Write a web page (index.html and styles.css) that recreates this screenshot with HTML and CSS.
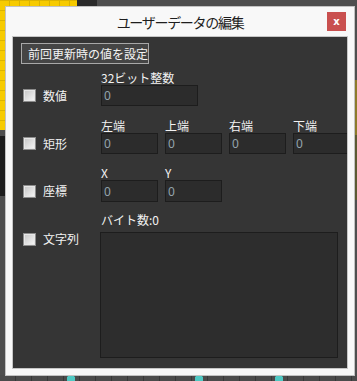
FILE: index.html
```html
<!DOCTYPE html>
<html lang="ja">
<head>
    <meta charset="UTF-8">
    <title>ユーザーデータの編集</title>
    <link rel="stylesheet" href="styles.css">
</head>
<body>
    <div class="dialogo">
        <div class="barra-titulo">
            <span></span>
            <span class="titulo">ユーザーデータの編集</span>
            <button class="fechar">x</button>
        </div>

        <div class="painel">
            <button class="btn-anterior">前回更新時の値を設定</button>

            <div class="linha linha-primeira">
                <span class="rotulo rotulo-largo">32ビット整数</span>
                <label class="marcar"><input type="checkbox"> 数値</label>
                <input class="campo campo-largo" type="text" value="0">
            </div>

            <div class="linha">
                <span class="rotulo">左端</span>
                <span class="rotulo">上端</span>
                <span class="rotulo">右端</span>
                <span class="rotulo">下端</span>
                <label class="marcar"><input type="checkbox"> 矩形</label>
                <input class="campo" type="text" value="0">
                <input class="campo" type="text" value="0">
                <input class="campo" type="text" value="0">
                <input class="campo" type="text" value="0">
            </div>

            <div class="linha linha-coord">
                <span class="rotulo">X</span>
                <span class="rotulo">Y</span>
                <label class="marcar"><input type="checkbox"> 座標</label>
                <input class="campo" type="text" value="0">
                <input class="campo" type="text" value="0">
            </div>

            <div class="linha linha-texto">
                <span class="rotulo rotulo-largo">バイト数:0</span>
                <label class="marcar"><input type="checkbox"> 文字列</label>
                <textarea class="texto"></textarea>
            </div>
        </div>
    </div>
</body>
</html>
```

FILE: styles.css
```css
html, body {
    margin: 0;
    height: 381px;
    overflow: hidden;
}

body {
    font-family: "Noto Sans CJK JP", "Noto Sans", sans-serif;
    font-size: 12px;
    padding: 6px 0 0 5px;
    box-sizing: border-box;
    background:
        radial-gradient(circle, #4fc9c4 0 4px, transparent 4.5px) 66px 374px / 10px 10px no-repeat,
        radial-gradient(circle, #4fc9c4 0 4px, transparent 4.5px) 194px 374px / 10px 10px no-repeat,
        radial-gradient(circle, #4fc9c4 0 4px, transparent 4.5px) 274px 374px / 10px 10px no-repeat,
        repeating-linear-gradient(90deg, transparent 0 9px, #dcb400 9px 10px) 0 0 / 77px 130px no-repeat,
        repeating-linear-gradient(0deg, transparent 0 9px, #dcb400 9px 10px) 0 0 / 77px 130px no-repeat,
        linear-gradient(#f7cb00, #f7cb00) 0 0 / 77px 130px no-repeat,
        linear-gradient(#2b2b2b, #2b2b2b) 77px 0 / 20px 6px no-repeat,
        linear-gradient(#1c1c1c, #1c1c1c) 0 136px / 5px 60px no-repeat,
        linear-gradient(#8c7a2a, #8c7a2a) 355px 80px / 2px 55px no-repeat,
        linear-gradient(#5c5a32, #5c5a32) 355px 135px / 2px 65px no-repeat,
        repeating-linear-gradient(90deg, #4b4b4b 0 15px, #383838 15px 16px) 0 375px / 357px 6px no-repeat,
        #4e4e4e;
}

.dialogo {
    width: 350px;
    height: 370px;
    box-sizing: border-box;
    border: 1px solid #c2c2c2;
    background-color: #f8f8f8;
    display: flex;
    flex-direction: column;
}

.barra-titulo {
    height: 29px;
    display: grid;
    grid-template-columns: 1fr auto 1fr;
    align-items: center;
}

.titulo {
    font-size: 14px;
    letter-spacing: -1.3px;
    color: #1e1e1e;
}

.fechar {
    justify-self: end;
    width: 19px;
    height: 19px;
    margin-right: 8px;
    padding: 0;
    border: none;
    background-color: #c9504f;
    color: white;
    font-family: "DejaVu Sans", sans-serif;
    font-weight: bold;
    font-size: 10px;
    line-height: 19px;
}

.painel {
    flex: 1;
    margin: 0 6px 6px 6px;
    border: 1px solid #c6c6c6;
    background-color: #353535;
    padding: 6px 0 0 8px;
    overflow: hidden;
    color: #f2f2f2;
}

.btn-anterior {
    display: block;
    width: 128px;
    height: 21px;
    padding: 0 0 0 6px;
    text-align: left;
    font-family: inherit;
    font-size: 12px;
    line-height: 19px;
    color: #f4f4f4;
    background-color: #454545;
    border: 1px solid #a8a8a8;
}

.linha {
    display: grid;
    grid-template-columns: 73px repeat(4, 57px);
    grid-template-rows: 14px auto;
    column-gap: 7px;
    margin-top: 13px;
}

.linha-primeira {
    margin-top: 7px;
}

.linha-coord {
    margin-top: 12px;
}

.linha-texto {
    margin-top: 11px;
    grid-template-rows: 19px auto;
}

.rotulo {
    grid-row: 1;
    line-height: 14px;
    white-space: nowrap;
}

.rotulo:nth-child(1) { grid-column: 2; }
.rotulo:nth-child(2) { grid-column: 3; }
.rotulo:nth-child(3) { grid-column: 4; }
.rotulo:nth-child(4) { grid-column: 5; }

.rotulo-largo {
    grid-column: 2 / span 3;
}

.marcar {
    grid-row: 2;
    grid-column: 1;
    align-self: center;
    display: flex;
    align-items: center;
    gap: 7px;
    padding-left: 2px;
    line-height: 14px;
}

.linha-texto .marcar {
    align-self: start;
}

.marcar input {
    appearance: none;
    margin: 0;
    width: 13px;
    height: 13px;
    border: 1px solid #8c8c8c;
    background: linear-gradient(135deg, #c4c4c4, #f8f8f8);
    box-shadow: inset 0 0 0 1px #e6e6e6;
}

.campo {
    grid-row: 2;
    width: 57px;
    height: 21px;
    box-sizing: border-box;
    margin: 0;
    padding: 0 2px;
    border: 1px solid #1d1d1d;
    background-color: #2c2c2c;
    color: #93a4ac;
    font-family: "Noto Sans", sans-serif;
    font-size: 12px;
}

.linha-coord .campo {
    height: 22px;
}

.campo-largo {
    grid-column: 2 / span 2;
    width: 97px;
}

.texto {
    grid-row: 2;
    grid-column: 2 / span 4;
    width: 238px;
    height: 126px;
    box-sizing: border-box;
    margin: 0 0 0 -1px;
    border: 1px solid #1d1d1d;
    background-color: #2d2d2d;
    resize: none;
}
```
